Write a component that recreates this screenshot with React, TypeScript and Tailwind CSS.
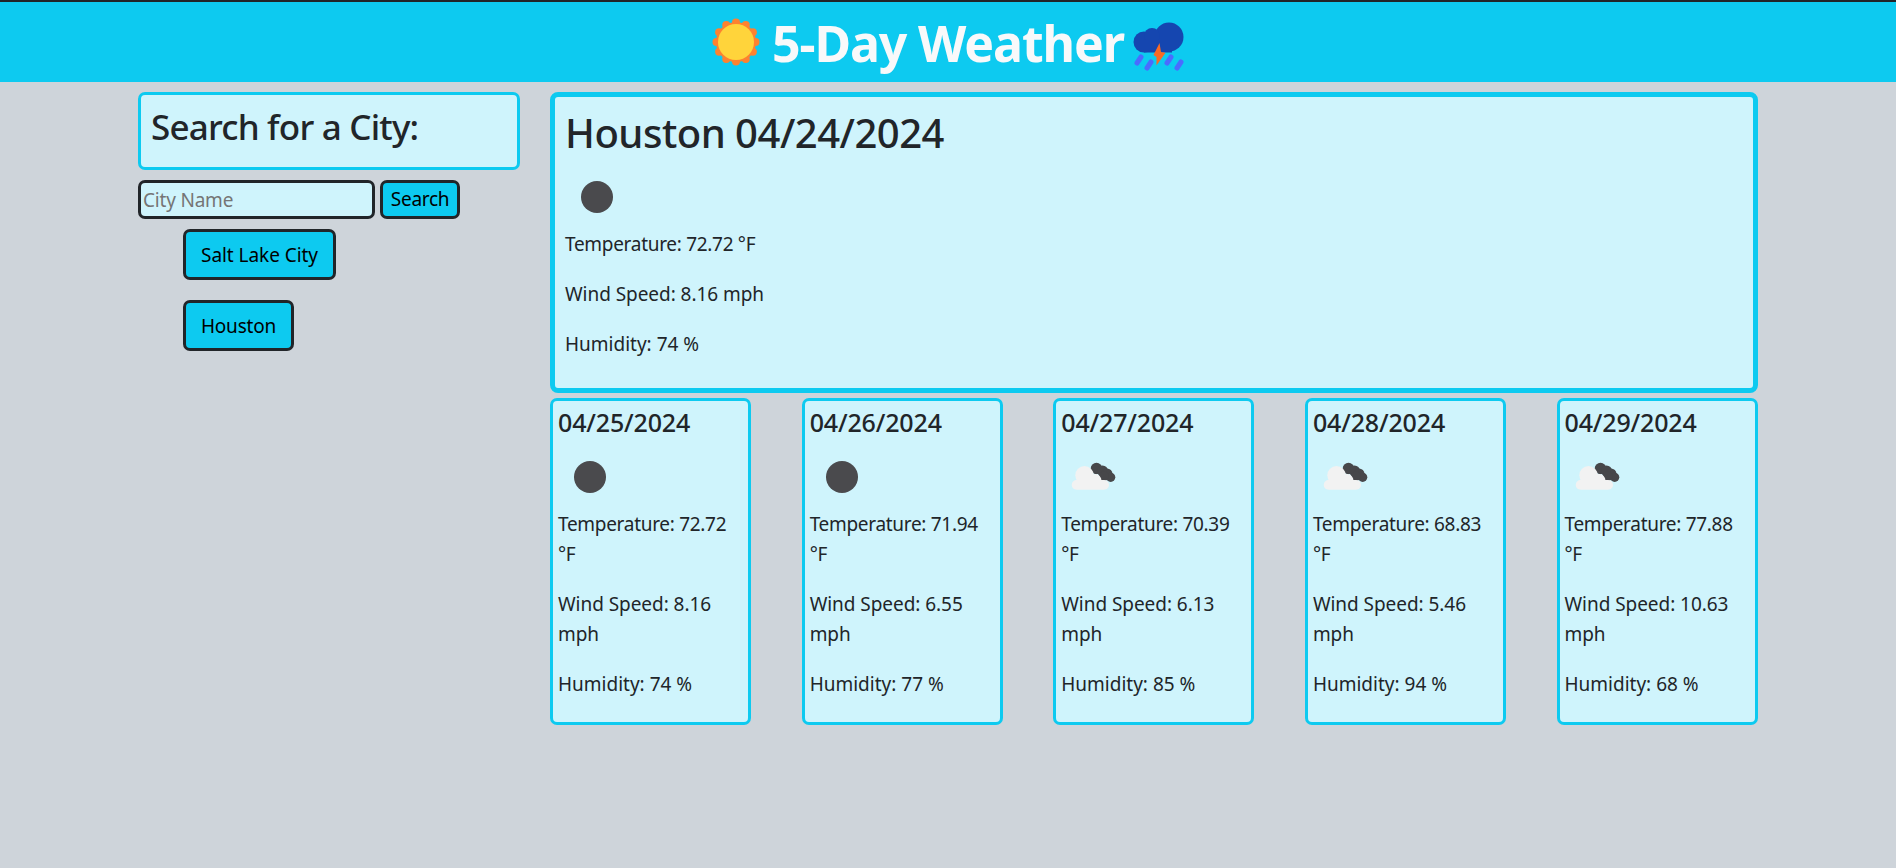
const font = "[font-family:'Noto_Sans','Open_Sans',sans-serif]";

function Sun() {
  const bumps = Array.from({ length: 12 }, (_, i) => {
    const a = (i * Math.PI) / 6;
    return { x: 24 + 19.5 * Math.cos(a), y: 24 + 19.5 * Math.sin(a) };
  });
  return (
    <svg width="48" height="48" viewBox="0 0 48 48" className="shrink-0">
      <circle cx="24" cy="24" r="20" fill="#fd8230" />
      {bumps.map((b, i) => (
        <circle key={i} cx={b.x} cy={b.y} r="4" fill="#fd8230" />
      ))}
      <circle cx="24" cy="24" r="18" fill="#ffd43b" />
    </svg>
  );
}

function Storm() {
  return (
    <svg width="56" height="60" viewBox="7 0 56 60" className="shrink-0">
      <g fill="#1546b0">
        <circle cx="43" cy="25" r="14.5" />
        <circle cx="18" cy="30" r="10.5" />
        <circle cx="26" cy="24" r="8" />
        <rect x="18" y="28" width="28" height="12.5" />
      </g>
      <g stroke="#4a6cff" strokeWidth="5" strokeLinecap="round">
        <line x1="15" y1="45" x2="11" y2="51" />
        <line x1="25" y1="50" x2="21" y2="56" />
        <line x1="45" y1="45" x2="41" y2="51" />
        <line x1="55" y1="50" x2="51" y2="56" />
      </g>
      <polygon points="33.5,31 35,40 39.5,40.7 30.5,53.5 30.5,45 27.5,43" fill="#f96a24" />
    </svg>
  );
}

function Moon() {
  return (
    <svg width="63" height="63" viewBox="0 0 63 63" className="block">
      <circle cx="32" cy="32" r="16" fill="#4a4a4d" />
    </svg>
  );
}

function Clouds() {
  return (
    <svg width="63" height="63" viewBox="0 0 63 63" className="block">
      <g fill="#47474a">
        <circle cx="35.5" cy="23.5" r="5.8" />
        <circle cx="41.5" cy="26" r="5.5" />
        <circle cx="46" cy="29" r="5.5" />
        <circle cx="49.7" cy="32.3" r="4.6" />
        <circle cx="43" cy="31" r="5" />
      </g>
      <g fill="#f2f2f2">
        <circle cx="23.5" cy="30.2" r="9.2" />
        <circle cx="34" cy="35.5" r="6.5" />
        <rect x="10.7" y="35" width="37.3" height="9.8" rx="4.9" />
        <rect x="20" y="32" width="12" height="6" />
      </g>
    </svg>
  );
}

const days = [
  { date: "04/25/2024", temp: "72.72", wind: "8.16", hum: "74", icon: "moon" },
  { date: "04/26/2024", temp: "71.94", wind: "6.55", hum: "77", icon: "moon" },
  { date: "04/27/2024", temp: "70.39", wind: "6.13", hum: "85", icon: "cloud" },
  { date: "04/28/2024", temp: "68.83", wind: "5.46", hum: "94", icon: "cloud" },
  { date: "04/29/2024", temp: "77.88", wind: "10.63", hum: "68", icon: "cloud" },
];

export default function App() {
  return (
    <div className={`min-h-[868px] bg-[#ced4da] text-[#212529] ${font}`}>
      <header className="h-[82px] bg-[#0dcaf0] border-t-2 border-[#212529] pl-[5px] flex items-center justify-center">
        <Sun />
        <h1 className="text-[50px] leading-[60px] font-bold text-[#f8f9fa] ml-[12px] mr-[9px] tracking-[-1.1px] pt-[2px]">5-Day Weather</h1>
        <Storm />
      </header>
      <div className="flex pl-[138px] pt-[10px] gap-[30px]">
        <aside className="w-[382px] shrink-0">
          <div className="border-[3px] border-[#0dcaf0] bg-[#cff4fc] rounded-[7px] pt-[11px] px-[10px] pb-[9px]">
            <h3 className="text-[35px] leading-[42px] font-medium mb-[10px] tracking-[-0.8px]">Search for a City:</h3>
          </div>
          <div className="flex gap-[5px] mt-[10px]">
            <input
              placeholder="City Name"
              className="w-[237px] h-[39px] border-[3px] border-[#212529] rounded-[7px] bg-[#cff4fc] px-[2px] text-[19px] tracking-[-0.2px] placeholder:text-[#757575]"
            />
            <button className="w-[80px] h-[39px] border-[3px] border-[#212529] rounded-[7px] bg-[#0dcaf0] text-black text-[19px] tracking-[-0.3px]">Search</button>
          </div>
          <ul className="pl-[45px] mt-[10px] flex flex-col items-start gap-[20px]">
            <li><button className="h-[51px] w-[153px] pt-[1px] border-[3px] border-[#212529] rounded-[7px] bg-[#0dcaf0] text-black text-[19px] tracking-[-0.05px] whitespace-nowrap">Salt Lake City</button></li>
            <li><button className="h-[51px] w-[111px] pt-[1px] border-[3px] border-[#212529] rounded-[7px] bg-[#0dcaf0] text-black text-[19px] tracking-[-0.2px]">Houston</button></li>
          </ul>
        </aside>
        <main className="w-[1208px] shrink-0">
          <section className="border-[5px] border-[#0dcaf0] bg-[#cff4fc] rounded-[8px] p-[10px] h-[301px]">
            <h2 className="text-[40px] leading-[48px] font-medium pt-[2px] mb-[8px] tracking-[-0.5px]">Houston 04/24/2024</h2>
            <Moon />
            <p className="text-[19px] leading-[30px] mt-[1px] mb-[20px] tracking-[-0.3px]">Temperature: 72.72 °F</p>
            <p className="text-[19px] leading-[30px] mb-[20px] tracking-[-0.05px]">Wind Speed: 8.16 mph</p>
            <p className="text-[19px] leading-[30px] tracking-[0px]">Humidity: 74 %</p>
          </section>
          <div className="flex justify-between mt-[5px] pr-[0.5px]">
            {days.map((d) => (
              <article key={d.date} className="w-[201px] h-[327px] border-[3px] border-[#0dcaf0] bg-[#cff4fc] rounded-[7px] p-[5px]">
                <h4 className="text-[25px] leading-[30px] font-medium pt-[1px] mb-[8px] tracking-[-0.15px]">{d.date}</h4>
                {d.icon === "moon" ? <Moon /> : <Clouds />}
                <p className="text-[19px] leading-[30px] mt-[1px] mb-[20px] tracking-[-0.3px]">Temperature: {d.temp} °F</p>
                <p className="text-[19px] leading-[30px] mb-[20px] tracking-[-0.05px]">Wind Speed: {d.wind} mph</p>
                <p className="text-[19px] leading-[30px] tracking-[0px]">Humidity: {d.hum} %</p>
              </article>
            ))}
          </div>
        </main>
      </div>
    </div>
  );
}
